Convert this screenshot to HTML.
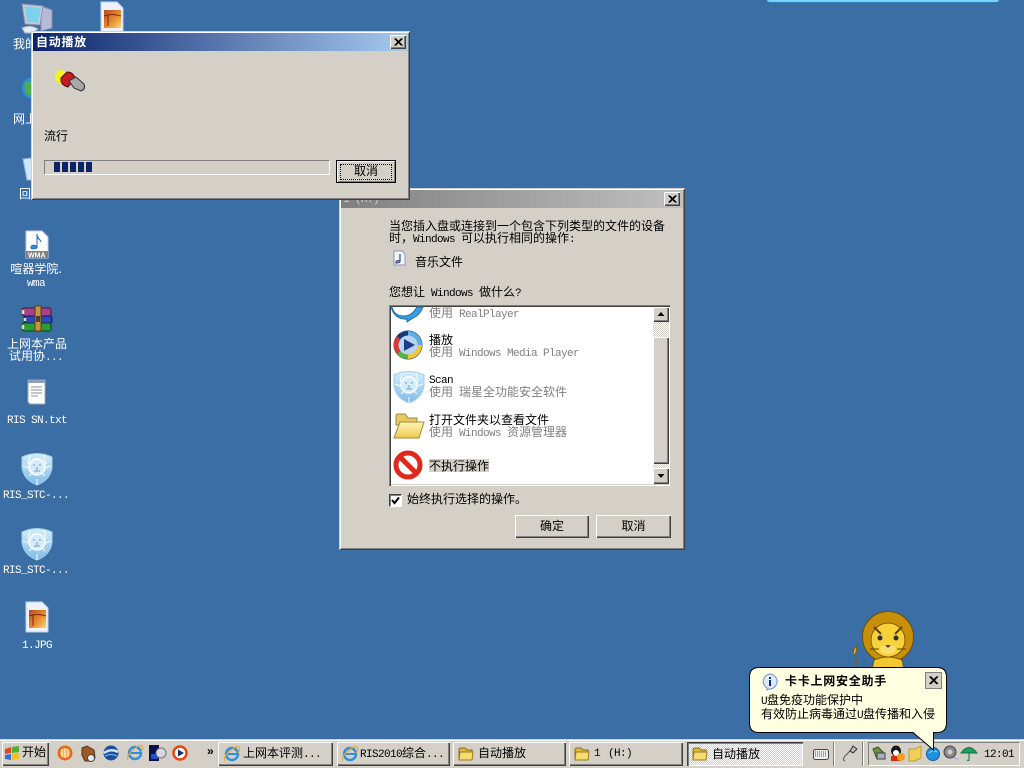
<!DOCTYPE html>
<html><head><meta charset="utf-8"><title>Desktop</title>
<style>
html,body{margin:0;padding:0;width:1024px;height:768px;overflow:hidden;background:#3a6ea5}
body{position:relative;font:12px/12px "WenQuanYi Zen Hei","Noto Sans CJK SC",sans-serif;color:#000}
.a{position:absolute}
.t{position:absolute;white-space:nowrap;line-height:12px;font-size:12px}
.m{font-family:"Liberation Mono",monospace;font-size:11px;letter-spacing:-.6px;white-space:pre}
.d{position:absolute;color:#fff;text-align:center;width:76px;line-height:12px;white-space:nowrap}
.g{color:#808080}
.win{position:absolute;background:#d4d0c8;box-shadow:inset 1px 1px 0 #d4d0c8,inset -1px -1px 0 #404040,inset 2px 2px 0 #fff,inset -2px -2px 0 #808080}
.xb{position:absolute;width:16px;height:14px;background:#d4d0c8;box-shadow:inset 1px 1px 0 #fff,inset -1px -1px 0 #404040,inset -2px -2px 0 #808080}
.btn{position:absolute;background:#d4d0c8;box-shadow:inset 1px 1px 0 #fff,inset -1px -1px 0 #404040,inset -2px -2px 0 #808080;text-align:center;line-height:22px}
.task{position:absolute;top:742px;height:24px;background:#d4d0c8;box-shadow:inset 1px 1px 0 #fff,inset -1px -1px 0 #404040,inset -2px -2px 0 #808080}
svg{position:absolute;overflow:visible}
</style></head><body>
<svg width="0" height="0" style="position:absolute"><defs>
<linearGradient id="sh" x1="0" y1="0" x2="0" y2="1"><stop offset="0" stop-color="#d4eefc"/><stop offset="1" stop-color="#7fbce8"/></linearGradient>
<linearGradient id="ph" x1="0" y1="0" x2="1" y2="1"><stop offset="0" stop-color="#b84a1c"/><stop offset=".55" stop-color="#e88c30"/><stop offset="1" stop-color="#f8d878"/></linearGradient>
<linearGradient id="fo" x1="0" y1="0" x2="0" y2="1"><stop offset="0" stop-color="#fff4b8"/><stop offset="1" stop-color="#f0c850"/></linearGradient>
<g id="shield"><path d="M1 5Q16-2 31 5L31 16Q29 28 16 33Q3 28 1 16Z" fill="url(#sh)" stroke="#9fcdec"/><path d="M9 3L7 12M23 3L25 12M2 14L8 16M30 14L24 16M8 24L12 20M24 24L20 20M16 27V33" stroke="#fff" fill="none"/><circle cx="16" cy="15" r="8" fill="#d6ecfa" stroke="#fff" stroke-width="1.500"/><path d="M12 13h2M18 13h2M16 15v3M13 19h6" stroke="#5d9fcc"/></g>
<g id="jpg"><path d="M1 0H17L23 6V30H1Z" fill="#edf2fc" stroke="#c4d0ec"/><rect x="4" y="8" width="17" height="18" fill="url(#ph)"/><path d="M4 14Q12 11 21 14" stroke="#7a2a10" fill="none"/><path d="M8 13V24" stroke="#7a2a10"/></g>
<g id="folder"><path d="M1 4Q1 2 3 2H7L9 4H14V14H1Z" fill="#e0b840" stroke="#8a6a18"/><path d="M2 6H15L14 14H1Z" fill="#f8dc70" stroke="#9a7a20"/></g>
<g id="ie"><circle cx="8" cy="8" r="6" fill="none" stroke="#2f8fdc" stroke-width="2.400"/><path d="M3 8h10" stroke="#2f8fdc" stroke-width="2"/><path d="M1 15Q-1 11 6 5T15 1Q17 3 14 7" fill="none" stroke="#e2a93a" stroke-width="1.200"/></g>
</defs></svg>

<!-- top strip -->
<div class="a" style="left:767px;top:0;width:232px;height:2px;background:#7fd0f5;border-bottom:1px solid #2a7fc0;border-radius:0 0 4px 4px"></div>

<!-- desktop icons -->
<svg style="left:22px;top:3px" width="32" height="30"><path d="M19 3L30 7V25L19 28Z" fill="#b6bad8" stroke="#8a90a8"/><path d="M0 1L21 3L18 22L3 21Z" fill="#c8ccd8" stroke="#8a90a8"/><path d="M3 3L19 5L16 20L5 19Z" fill="#7fd0f0"/><path d="M0 25Q8 21 16 26L10 30H3Z" fill="#e6ecf6" stroke="#a8b0c8"/></svg>
<svg style="left:100px;top:2px" width="24" height="30"><use href="#jpg"/></svg>
<div class="d" style="left:-1px;top:38px">我的电脑</div>
<svg style="left:21px;top:76px" width="24" height="24"><circle cx="12" cy="12" r="11" fill="#2f8fdc"/><path d="M4 6Q10 4 12 10T8 20Q2 16 4 6Z" fill="#4fae4a"/></svg>
<div class="d" style="left:-1px;top:113px">网上邻居</div>
<svg style="left:22px;top:156px" width="24" height="26"><path d="M1 3L19 1L17 24H5Z" fill="#cfe6f8" stroke="#8fb6d8"/></svg>
<div class="d" style="left:-1px;top:188px">回收站</div>

<svg style="left:25px;top:231px" width="24" height="28"><path d="M1 0H17L23 6V27H1Z" fill="#fff" stroke="#c6cede"/><path d="M12 3V15Q7 13 6 16T12 17V7Q15 8 16 11" fill="#2a8fd8" stroke="#1a70c0"/><rect x="1" y="20" width="22" height="7" fill="#808080"/><text x="3" y="26.500" font-family="Liberation Sans" font-size="7" font-weight="bold" fill="#fff">WMA</text></svg>
<div class="d" style="left:-2px;top:263px">喧器学院.</div>
<div class="d" style="left:-2px;top:276px"><span class="m">wma</span></div>
<svg style="left:21px;top:306px" width="32" height="26"><rect x="1" y="2" width="29" height="8" rx="2" fill="#a8408c" stroke="#401838"/><rect x="3" y="10" width="28" height="7" rx="2" fill="#2848c8" stroke="#101848"/><rect x="1" y="17" width="29" height="8" rx="2" fill="#2a9c38" stroke="#103c18"/><path d="M2 4V8M4 12V15M2 19V23" stroke="#e8d8b0" stroke-width="2.500"/><path d="M14 0H20V25H14Z" fill="#c8963a" stroke="#5a3a10"/><rect x="15" y="10" width="4" height="6" fill="#444"/></svg>
<div class="d" style="left:-1px;top:338px">上网本产品</div>
<div class="d" style="left:-2px;top:350px">试用协<span class="m">...</span></div>
<svg style="left:27px;top:378px" width="20" height="28"><path d="M1 2H18V26H3L1 24Z" fill="#fff" stroke="#a0a8b8"/><path d="M1 2H18V5H1Z" fill="#8fa0b8"/><path d="M4 9h11M4 12h11M4 15h11M4 18h7" stroke="#8090a8"/></svg>
<div class="d" style="left:-1px;top:413px"><span class="m">RIS SN.txt</span></div>
<svg style="left:21px;top:452px" width="32" height="34"><use href="#shield"/></svg>
<div class="d" style="left:-2px;top:488px"><span class="m">RIS_STC-...</span></div>
<svg style="left:21px;top:527px" width="32" height="34"><use href="#shield"/></svg>
<div class="d" style="left:-2px;top:563px"><span class="m">RIS_STC-...</span></div>
<svg style="left:25px;top:602px" width="24" height="30"><use href="#jpg"/></svg>
<div class="d" style="left:-1px;top:638px"><span class="m">1.JPG</span></div>

<!-- Main autoplay dialog -->
<div class="win" style="left:339px;top:188px;width:346px;height:362px"></div>
<div class="a" style="left:341px;top:190px;width:342px;height:18px;background:linear-gradient(90deg,#808080,#c0c0c0)"></div>
<div class="t m" style="left:343px;top:194px;color:#d4d0c8">1 (H:)</div>
<div class="xb" style="left:664px;top:192px"></div>
<svg style="left:664px;top:192px" width="16" height="14"><path d="M4.500 3.500L11.500 10.500M5.500 3.500L12.500 10.500M11.500 3.500L4.500 10.500M12.500 3.500L5.500 10.500" stroke="#000"/></svg>
<div class="t" style="left:389px;top:220px">当您插入盘或连接到一个包含下列类型的文件的设备</div>
<div class="t" style="left:389px;top:232px">时，<span class="m">Windows </span>可以执行相同的操作<span class="m">:</span></div>
<svg style="left:391px;top:250px" width="16" height="16"><path d="M3 1H11L14 4V15H3Z" fill="#f4f6fc" stroke="#8a94b8"/><path d="M9 4V11Q6 10 5 12T9 12" fill="none" stroke="#40508c" stroke-width="1.300"/></svg>
<div class="t" style="left:415px;top:256px">音乐文件</div>
<div class="t" style="left:389px;top:286px">您想让<span class="m"> Windows </span>做什么<span class="m">?</span></div>

<div class="a" style="left:389px;top:305px;width:281px;height:181px;background:#fff;box-shadow:inset 1px 1px 0 #808080,inset 2px 2px 0 #404040,inset -1px -1px 0 #fff,inset -2px -2px 0 #d4d0c8"></div>
<svg style="left:391px;top:307px" width="34" height="15"><path d="M1 0Q3 9 13 9Q21 9 26 0H32Q29 8 22 11L16 15L16 12Q4 13 0 0Z" fill="#3aa0dc" stroke="#1c6ca8"/></svg>
<div class="t g" style="left:429px;top:307px">使用<span class="m"> RealPlayer</span></div>
<svg style="left:393px;top:330px" width="32" height="32"><circle cx="15" cy="15" r="14.500" fill="#1a3a7c"/><path d="M15 1A14 14 0 0 1 29 15L24 15A9 9 0 0 0 15 6Z" fill="#5cb0e8"/><path d="M29 15A14 14 0 0 1 15 29L15 24A9 9 0 0 0 24 15Z" fill="#f0c838"/><path d="M15 29A14 14 0 0 1 4 24L8 20A9 9 0 0 0 15 24Z" fill="#5cb048"/><path d="M4 24A14 14 0 0 1 4 6L8 10A9 9 0 0 0 8 20Z" fill="#d83830"/><circle cx="15" cy="15" r="9.500" fill="#b8d4f0"/><path d="M11 9L22 15L11 21Z" fill="#203c8c"/></svg>
<div class="t" style="left:429px;top:334px">播放</div>
<div class="t g" style="left:429px;top:346px">使用<span class="m"> Windows Media Player</span></div>
<svg style="left:393px;top:370px" width="32" height="34"><use href="#shield"/></svg>
<div class="t m" style="left:429px;top:375px">Scan</div>
<div class="t g" style="left:429px;top:386px">使用<span class="m"> </span>瑞星全功能安全软件</div>
<svg style="left:393px;top:411px" width="32" height="30"><path d="M3 5Q3 3 5 3H12L15 7H24V14H3Z" fill="#e8c860" stroke="#a08838"/><path d="M7 11H31L26 27H1Z" fill="url(#fo)" stroke="#a08838"/></svg>
<div class="t" style="left:429px;top:414px">打开文件夹以查看文件</div>
<div class="t g" style="left:429px;top:426px">使用<span class="m"> Windows </span>资源管理器</div>
<svg style="left:393px;top:450px" width="32" height="30"><circle cx="15" cy="15" r="12" fill="#fff" stroke="#e0281c" stroke-width="5"/><path d="M7 7L23 23" stroke="#e0281c" stroke-width="5"/></svg>
<div class="a" style="left:429px;top:459px;width:60px;height:13px;background:#d4d0c8"></div>
<div class="t" style="left:429px;top:460px">不执行操作</div>

<!-- scrollbar -->
<div class="a" style="left:653px;top:307px;width:16px;height:177px;background:repeating-conic-gradient(#fff 0 25%,#d4d0c8 0 50%) 0 0/2px 2px"></div>
<div class="xb" style="left:653px;top:307px;height:15px"></div>
<svg style="left:653px;top:307px" width="16" height="15"><path d="M8 5L4.500 9H11.500Z" fill="#000"/></svg>
<div class="xb" style="left:653px;top:337px;height:127px"></div>
<div class="xb" style="left:653px;top:468px;height:16px"></div>
<svg style="left:653px;top:468px" width="16" height="16"><path d="M4.500 6H11.500L8 10Z" fill="#000"/></svg>

<div class="a" style="left:389px;top:494px;width:11px;height:11px;background:#fff;border:1px solid;border-color:#404040 #fff #fff #404040;box-shadow:inset 1px 1px 0 #808080,1px 1px 0 #d4d0c8"></div>
<svg style="left:389px;top:494px" width="13" height="13"><path d="M3 6L5.500 9L10 3.500" fill="none" stroke="#000" stroke-width="2"/></svg>
<div class="t" style="left:407px;top:493px">始终执行选择的操作。</div>
<div class="btn" style="left:515px;top:515px;width:74px;height:23px">确定</div>
<div class="btn" style="left:596px;top:515px;width:75px;height:23px">取消</div>

<!-- Progress dialog -->
<div class="win" style="left:31px;top:31px;width:379px;height:169px"></div>
<div class="a" style="left:33px;top:33px;width:375px;height:18px;background:linear-gradient(90deg,#0a246a,#a6caf0)"></div>
<div class="t" style="left:36px;top:36px;color:#fff;font-weight:bold;letter-spacing:.75px">自动播放</div>
<div class="xb" style="left:390px;top:35px"></div>
<svg style="left:390px;top:35px" width="16" height="14"><path d="M4.500 3.500L11.500 10.500M5.500 3.500L12.500 10.500M11.500 3.500L4.500 10.500M12.500 3.500L5.500 10.500" stroke="#000"/></svg>
<svg style="left:52px;top:68px" width="36" height="28"><ellipse cx="9" cy="9" rx="6" ry="7" fill="#f8f020"/><path d="M9 10L15 4Q21 4 23 10L16 19Q8 17 9 10Z" fill="#c81820" stroke="#401010"/><path d="M17 13L24 9L32 16Q34 21 29 23L22 20Z" fill="#a8a8a8" stroke="#303030"/></svg>
<div class="t" style="left:44px;top:130px">流行</div>
<div class="a" style="left:44px;top:160px;width:284px;height:13px;border:1px solid;border-color:#808080 #fff #fff #808080"></div>
<div class="a" style="left:54px;top:162px;width:6px;height:10px;background:#0a246a"></div>
<div class="a" style="left:62px;top:162px;width:6px;height:10px;background:#0a246a"></div>
<div class="a" style="left:70px;top:162px;width:6px;height:10px;background:#0a246a"></div>
<div class="a" style="left:78px;top:162px;width:6px;height:10px;background:#0a246a"></div>
<div class="a" style="left:86px;top:162px;width:6px;height:10px;background:#0a246a"></div>
<div class="btn" style="left:336px;top:160px;width:60px;height:23px;box-shadow:inset 0 0 0 1px #000,inset 1px 1px 0 1px #fff,inset -2px -2px 0 0 #808080"></div>
<div class="a" style="left:340px;top:164px;width:50px;height:14px;border:1px dotted #000"></div>
<div class="t" style="left:354px;top:165px">取消</div>

<!-- taskbar -->
<div class="a" style="left:0;top:739px;width:1024px;height:29px;background:#d4d0c8;border-top:1px solid #d4d0c8;box-sizing:border-box;box-shadow:inset 0 1px 0 #fff"></div>
<div class="task" style="left:2px;width:47px"></div>
<svg style="left:4px;top:745px" width="16" height="16"><path d="M1 4L7 2V8L1 9Z" fill="#e04820"/><path d="M8 2L15 1V7L8 8Z" fill="#50b030"/><path d="M1 10L7 9V15L1 14Z" fill="#3070d8"/><path d="M8 9L15 8V14L8 15Z" fill="#f0c020"/></svg>
<div class="t" style="left:22px;top:746px">开始</div>
<svg style="left:57px;top:745px" width="16" height="16"><circle cx="8" cy="8" r="7.500" fill="#e86a18"/><circle cx="8" cy="8" r="5" fill="#f6b050"/><path d="M8 3V13M5 4V12M11 4V12" stroke="#fff"/></svg>
<svg style="left:80px;top:745px" width="16" height="17"><path d="M2 3L7 1L14 5L15 13L12 16H5L2 10Z" fill="#a05828" stroke="#503010"/><circle cx="11" cy="13" r="3.500" fill="#eee" stroke="#444"/></svg>
<svg style="left:103px;top:745px" width="16" height="16"><circle cx="8" cy="8" r="7.500" fill="#1c4ea0"/><path d="M1 8Q8 3 15 7" stroke="#d0e4f8" stroke-width="2.500" fill="none"/><path d="M2 11Q8 8 14 11" stroke="#8cb8e8" fill="none"/></svg>
<svg style="left:127px;top:745px" width="16" height="16"><use href="#ie"/></svg>
<svg style="left:149px;top:745px" width="17" height="16"><rect width="10" height="16" fill="#0a1048"/><rect x="2" y="9" width="7" height="5" fill="#2050d0"/><circle cx="12" cy="8" r="5" fill="#d8d8e0" stroke="#707078"/></svg>
<svg style="left:172px;top:745px" width="16" height="16"><circle cx="8" cy="8" r="6.500" fill="#fff" stroke="#e84810" stroke-width="2.500"/><path d="M6 4.500L12 8L6 11.500Z" fill="#202868"/></svg>
<div class="t" style="left:207px;top:745px;font-weight:bold;font-family:'Liberation Sans'">»</div>

<div class="task" style="left:218px;width:115px"></div>
<svg style="left:224px;top:746px" width="16" height="16"><use href="#ie"/></svg>
<div class="t" style="left:243px;top:747px">上网本评测<span class="m">...</span></div>
<div class="task" style="left:337px;width:113px"></div>
<svg style="left:342px;top:746px" width="16" height="16"><use href="#ie"/></svg>
<div class="t" style="left:360px;top:747px"><span class="m">RIS2010</span>综合<span class="m">...</span></div>
<div class="task" style="left:453px;width:113px"></div>
<svg style="left:458px;top:746px" width="16" height="16"><use href="#folder"/></svg>
<div class="t" style="left:478px;top:747px">自动播放</div>
<div class="task" style="left:569px;width:114px"></div>
<svg style="left:574px;top:746px" width="16" height="16"><use href="#folder"/></svg>
<div class="t m" style="left:594px;top:748px">1<span style="margin-left:8px">(H:)</span></div>
<div class="task" style="left:687px;width:116px;background:repeating-conic-gradient(#fff 0 25%,#d4d0c8 0 50%) 0 0/2px 2px;box-shadow:inset 1px 1px 0 #404040,inset 2px 2px 0 #808080,inset -1px -1px 0 #fff"></div>
<svg style="left:692px;top:746px" width="16" height="16"><use href="#folder"/></svg>
<div class="t" style="left:712px;top:748px;font-weight:normal">自动播放</div>

<svg style="left:813px;top:748px" width="16" height="13"><rect x="0.500" y="1.500" width="15" height="10" rx="2" fill="#eee" stroke="#444"/><path d="M2 4h12M2 6h12M2 8h12" stroke="#555" stroke-dasharray="1 1"/></svg>
<div class="a" style="left:833px;top:742px;width:1px;height:24px;background:#808080;border-right:1px solid #fff"></div>
<svg style="left:842px;top:745px" width="15" height="17"><path d="M3 16Q0 15 3 11L9 5" stroke="#555" fill="none"/><path d="M8 6L11 1L15 4L11 8Z" fill="#b8b8c0" stroke="#333"/></svg>
<div class="a" style="left:862px;top:742px;width:1px;height:24px;background:#808080;border-right:1px solid #fff"></div>

<div class="a" style="left:868px;top:742px;width:152px;height:24px;box-sizing:border-box;border:1px solid;border-color:#808080 #fff #fff #808080"></div>
<svg style="left:871px;top:745px" width="16" height="17"><path d="M2 4L7 2L14 9L11 14H6Z" fill="#6a9040" stroke="#3a5820"/><rect x="6" y="8" width="8" height="6" fill="#a8b0c0" stroke="#444"/></svg>
<svg style="left:889px;top:745px" width="16" height="17"><ellipse cx="7" cy="6" rx="5" ry="5.500" fill="#181818"/><ellipse cx="7" cy="8" rx="3" ry="3" fill="#fff"/><path d="M2 11H11V16H2Z" fill="#d83018"/><circle cx="12" cy="12" r="4" fill="#f0a020"/></svg>
<svg style="left:907px;top:745px" width="16" height="16"><path d="M2 4H8L14 1V13L8 16H2Z" fill="#f0d058" stroke="#c0a030"/></svg>
<svg style="left:926px;top:747px" width="14" height="14"><circle cx="7" cy="7" r="6.500" fill="#1e90e0" stroke="#1060a0"/><path d="M3 6Q7 2 11 5" stroke="#a0dcf8" fill="none"/></svg>
<svg style="left:943px;top:745px" width="16" height="16"><circle cx="7" cy="7" r="6" fill="#888" stroke="#444"/><circle cx="7" cy="7" r="2.500" fill="#ccc"/><path d="M11 13L15 14" stroke="#a0a0f0"/></svg>
<svg style="left:961px;top:745px" width="16" height="17"><path d="M0 8Q8-3 16 8Z" fill="#20a060" stroke="#107040"/><path d="M8 7V15Q8 16 6 15" stroke="#107040" fill="none"/></svg>
<div class="t m" style="left:984px;top:749px">12:01</div>

<!-- mascot -->
<svg style="left:852px;top:610px" width="64" height="60"><path d="M2 46Q6 40 4 36Q0 42 2 46Z" fill="#e8b820" stroke="#806000"/><path d="M3 46L6 58" stroke="#806000"/><circle cx="36" cy="27" r="25.500" fill="#c89008" stroke="#704c00"/><ellipse cx="36" cy="30" rx="17" ry="17" fill="#f8d038" stroke="#805800"/><path d="M22 17L29 24M50 17L43 24" stroke="#604000" stroke-width="2"/><circle cx="28" cy="28" r="2.500" fill="#303030"/><circle cx="44" cy="28" r="2.500" fill="#303030"/><ellipse cx="36" cy="39" rx="8" ry="5" fill="#f8e070"/><path d="M33 35H39L36 38Z" fill="#703818"/><path d="M27 39H18M45 39H54" stroke="#604000"/><path d="M22 50Q36 44 50 50L52 60H20Z" fill="#f0c830" stroke="#805800"/></svg>

<!-- balloon -->
<svg style="left:749px;top:667px" width="200" height="86"><path d="M10 .500H188Q197.500 .500 197.500 10V56Q197.500 65.500 188 65.500H184.500V83L164 65.500H10Q.500 65.500 .500 56V10Q.500 .500 10 .500Z" fill="#ffffe1" stroke="#000"/></svg>
<svg style="left:761px;top:673px" width="18" height="18"><path d="M9 1A7.500 7.500 0 1 1 8 16L6 17L6 15A7.500 7.500 0 0 1 9 1Z" fill="#dfe8f8" stroke="#7090c8"/><rect x="8" y="7" width="2" height="6" fill="#102c80"/><rect x="8" y="4" width="2" height="2" fill="#102c80"/></svg>
<div class="t" style="left:785px;top:675px;font-weight:bold;letter-spacing:.75px">卡卡上网安全助手</div>
<div class="a" style="left:925px;top:672px;width:15px;height:15px;background:#d4d0c8;border:1px solid #808080;box-sizing:content-box"></div>
<svg style="left:925px;top:672px" width="17" height="17"><path d="M4.500 4.500L12 12M5.500 4.500L13 12M12 4.500L4.500 12M13 4.500L5.500 12" stroke="#000" stroke-width="1.200"/></svg>
<div class="t" style="left:761px;top:694px"><span class="m">U</span>盘免疫功能保护中</div>
<div class="t" style="left:761px;top:708px">有效防止病毒通过<span class="m">U</span>盘传播和入侵</div>
</body></html>
